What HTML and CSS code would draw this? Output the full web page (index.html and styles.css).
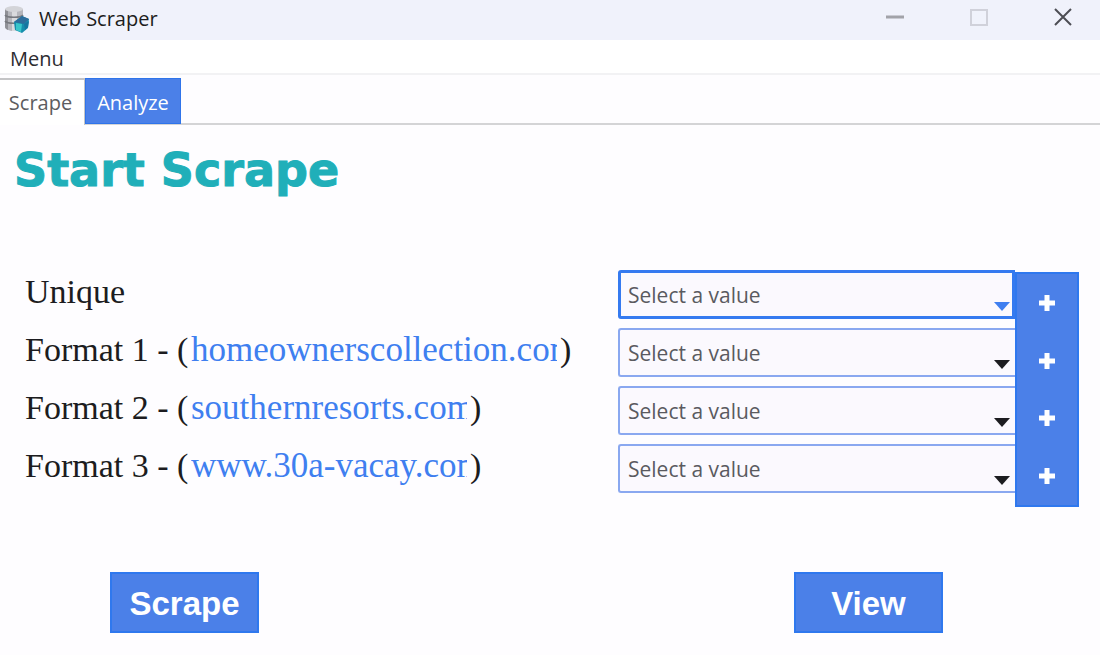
FILE: index.html
```html
<!DOCTYPE html>
<html lang="en">
<head>
<meta charset="utf-8">
<meta name="viewport" content="width=device-width, initial-scale=1">
<title>Web Scraper</title>
<link rel="stylesheet" href="styles.css">
</head>
<body>
<header class="titlebar">
  <svg class="app-icon" viewBox="0 0 30 32" aria-hidden="true">
    <path d="M5 7v18c0 2 4 4 9 4s9-2 9-4V7z" fill="#b4b5bb"/>
    <path d="M5 7v18c0 1 1 2 3 3V7z" fill="#8f9096"/>
    <path d="M12 9h5v20h-5z" fill="#d9dadd"/>
    <ellipse cx="14" cy="7" rx="9" ry="3" fill="#d3d4d8"/>
    <path d="M5 13c2 3 16 3 18 0M5 19c2 3 16 3 18 0" fill="none" stroke="#77797f" stroke-width="1.5"/>
    <path d="M22 14l7 3-1 9-6 5-7-3-1-8z" fill="#168eac"/>
    <path d="M22 14l7 3-5 5-10-2z" fill="#2d6d9c"/>
    <path d="M16 21l6 1-1 8-5-2z" fill="#38c6ca"/>
    <path d="M24 22l5-3-1 6-3 3z" fill="#1675a0"/>
  </svg>
  <span class="app-name">Web Scraper</span>
  <div class="window-controls">
    <button class="window-button" aria-label="Minimize"><svg viewBox="0 0 20 20"><path d="M1 9h18" stroke="#a2a3a9" stroke-width="3"/></svg></button>
    <button class="window-button" aria-label="Maximize" disabled><svg viewBox="0 0 20 20"><rect x="2" y="2" width="16" height="15" fill="none" stroke="#d0d1da" stroke-width="2"/></svg></button>
    <button class="window-button" aria-label="Close"><svg viewBox="0 0 20 20"><path d="M2 1l16 16M18 1L2 17" stroke="#4d4e54" stroke-width="2"/></svg></button>
  </div>
</header>
<nav class="menubar"><button class="menu-item">Menu</button></nav>
<div class="tabs" role="tablist">
  <button class="tab tab-current" role="tab" aria-selected="true">Scrape</button>
  <button class="tab tab-other" role="tab" aria-selected="false">Analyze</button>
</div>
<main>
  <h1 class="heading">Start Scrape</h1>
  <form class="form">
    <div class="rows">
      <div class="row">
        <label class="name" for="unique">Unique</label>
        <div class="picker picker-focus"><select id="unique"><option>Select a value</option></select></div>
      </div>
      <div class="row">
        <div class="name"><label class="format" for="format1">Format 1 - (</label><a class="site site-long" href="#">homeownerscollection.com</a><span>)</span></div>
        <div class="picker"><select id="format1"><option>Select a value</option></select></div>
      </div>
      <div class="row">
        <div class="name"><label class="format" for="format2">Format 2 - (</label><a class="site" href="#">southernresorts.com</a><span>)</span></div>
        <div class="picker"><select id="format2"><option>Select a value</option></select></div>
      </div>
      <div class="row">
        <div class="name"><label class="format" for="format3">Format 3 - (</label><a class="site" href="#">www.30a-vacay.com</a><span>)</span></div>
        <div class="picker"><select id="format3"><option>Select a value</option></select></div>
      </div>
    </div>
    <div class="adders">
      <button type="button" class="add" aria-label="Add unique"><svg viewBox="0 0 18 18"><path d="M9 1v16M1 9h16"/></svg></button>
      <button type="button" class="add" aria-label="Add format 1"><svg viewBox="0 0 18 18"><path d="M9 1v16M1 9h16"/></svg></button>
      <button type="button" class="add" aria-label="Add format 2"><svg viewBox="0 0 18 18"><path d="M9 1v16M1 9h16"/></svg></button>
      <button type="button" class="add" aria-label="Add format 3"><svg viewBox="0 0 18 18"><path d="M9 1v16M1 9h16"/></svg></button>
    </div>
  </form>
  <div class="actions">
    <button class="action">Scrape</button>
    <button class="action">View</button>
  </div>
</main>
</body>
</html>
```

FILE: styles.css
```css
* { box-sizing: border-box; }
body {
  margin: 0;
  background: #fefdff;
  color: #1c1c20;
  font-family: "Open Sans", "Noto Sans", sans-serif;
  font-size: 20px;
}
button { font: inherit; border: 0; padding: 0; background: none; }

.titlebar {
  display: flex;
  align-items: center;
  height: 40px;
  padding: 0 0 4px;
  background: #f0f2fb;
}
.app-icon { width: 30px; height: 32px; }
.app-name { margin-left: 9px; }
.window-controls { display: flex; margin-left: auto; padding-right: 27px; gap: 64px; }
.window-button { width: 20px; height: 20px; }
.window-button svg { display: block; width: 20px; height: 20px; }

.menubar { height: 35px; padding: 0 10px; background: #fff; border-bottom: 2px solid #f2f2f4; }
.menu-item { height: 36px; color: #2c2c30; }

.tabs { display: flex; margin-top: 3px; height: 47px; border-bottom: 2px solid #d4d4d6; }
.tab { height: 46px; }
.tab-current {
  width: 85px;
  height: 47px;
  padding-right: 3px;
  background: #fff;
  color: #5c5c60;
  border-top: 2px solid #c4c4c6;
  border-right: 1px solid #c4c4c6;
}
.tab-other { width: 96px; padding-top: 2px; color: #fff; background: #4b80e8; border: 1px solid #2f74ea; }

.heading {
  margin: 0;
  padding: 13px 14px 0;
  font-family: "DejaVu Sans", sans-serif;
  font-size: 46px;
  font-weight: 700;
  line-height: 64px;
  color: #20afb9;
  -webkit-text-stroke: 1px #20afb9;
}

.form { display: flex; padding: 68px 21px 0 25px; }
.rows { flex: 1; display: flex; flex-direction: column; gap: 9px; }
.row { display: grid; grid-template-columns: minmax(0, 593fr) minmax(0, 397fr); }
.name {
  display: flex;
  align-items: center;
  height: 48px;
  padding-bottom: 4px;
  font-family: "Liberation Serif", serif;
  font-size: 34px;
  line-height: 44px;
  white-space: nowrap;
}
.format { width: 166px; }
.site { width: 276px; margin-right: 3px; overflow: hidden; color: #3f7ff0; font-size: 35px; text-decoration: none; }
.site-long { width: 366px; }

.picker { position: relative; height: 49px; color: #1c1c20; }
.picker select {
  appearance: none;
  width: 100%;
  height: 100%;
  padding: 0 8px;
  border: 2px solid #8aa8f0;
  border-right: 0;
  border-radius: 3px 0 0 3px;
  outline: 0;
  background: #fbf9fe;
  color: #5a5a60;
  font: inherit;
  font-size: 21px;
}
.picker::after {
  content: "";
  position: absolute;
  right: 5px;
  bottom: 8px;
  width: 16px;
  height: 9px;
  background: currentColor;
  clip-path: polygon(0 0, 100% 0, 50% 100%);
  pointer-events: none;
}
.picker-focus { color: #3f7ff0; }
.picker-focus select { border: 3px solid #357af0; padding: 0 7px; }

.adders {
  display: flex;
  flex-direction: column;
  width: 64px;
  margin: 2px 0 0;
  height: 235px;
  background: #4b80e8;
  border: 2px solid #2f78ee;
}
.add { flex: 1; display: flex; align-items: center; justify-content: center; }
.add svg { width: 18px; height: 18px; fill: none; stroke: #fff; stroke-width: 5; }

.actions { display: flex; justify-content: space-between; padding: 65px 157px 22px 110px; }
.action {
  width: 149px;
  height: 61px;
  padding-top: 2px;
  border: 2px solid #2f78ee;
  background: #4b80e8;
  color: #fff;
  font-family: "Liberation Sans", sans-serif;
  font-size: 33px;
  font-weight: 700;
}
```
